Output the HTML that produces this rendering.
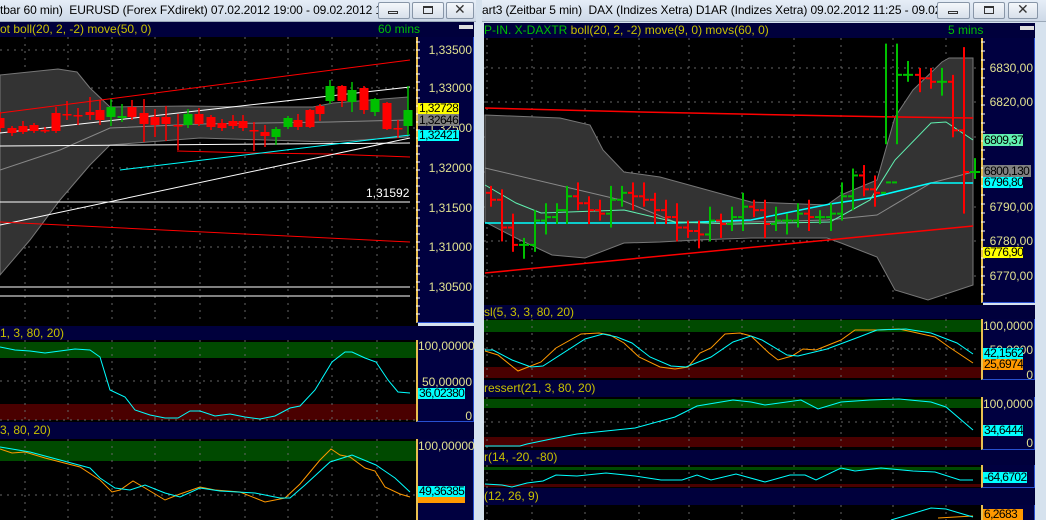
<!DOCTYPE html>
<html><head><meta charset="utf-8">
<style>
*{margin:0;padding:0;box-sizing:border-box}
body{width:1046px;height:520px;overflow:hidden;background:#d6e2ee;position:relative;font-family:"Liberation Sans",sans-serif}
.a{position:absolute}
.title{background:linear-gradient(#e6eef7,#cdd9e7);height:22px;font-size:12px;letter-spacing:-0.1px;color:#000;line-height:21px;white-space:nowrap;overflow:hidden;border-bottom:1px solid #9aa8b8}
.btn{position:absolute;top:2px;height:17px;border:1px solid #8896a8;border-radius:2px;background:linear-gradient(#f4f7fb,#d8e0ea)}
.hdr{background:#00003c;color:#c8c000;font-size:12px;line-height:15px;white-space:nowrap;overflow:hidden}
.ax{background:#000040;border-left:2px solid #e8c050;border-right:1px solid #2850d0;border-bottom:1px solid #2850d0}
.l{position:absolute;font-size:12px;color:#e0e090;line-height:12px;white-space:nowrap;text-align:right}
.b{position:absolute;font-size:12px;letter-spacing:-0.6px;color:#000;line-height:11px;height:11px;white-space:nowrap;padding-left:1px;overflow:hidden}
</style></head><body>
<!-- left window -->
<div class="a title" style="left:0;top:0;width:476px">tbar 60 min)&nbsp; EURUSD (Forex FXdirekt) 07.02.2012 19:00 - 09.02.2012 14...</div>
<div class="btn" style="left:378px;width:32px"></div><div class="btn" style="left:412px;width:32px"></div><div class="btn" style="left:446px;width:28px"></div>
<div class="a" style="left:388px;top:11px;width:10px;height:3px;border:1px solid #333"></div>
<div class="a" style="left:423px;top:6px;width:10px;height:8px;border:1px solid #333;border-top-width:2px"></div>
<div class="a" style="left:454px;top:1px;font-size:14px;color:#333">✕</div>
<div class="a hdr" style="left:0;top:22px;width:474px;height:15px">ot boll(20, 2, -2) move(50, 0)<span class="a" style="left:378px;color:#00c000">60 mins</span></div>
<div class="a" style="left:459px;top:25px;width:14px;height:4px;background:#ddd"></div>
<div class="a" style="left:0;top:37px;width:418px;height:289px;background:#000"></div>
<div class="a ax" style="left:416px;top:37px;width:58px;height:286px"></div>
<div class="a hdr" style="left:0;top:326px;width:474px;height:14px;line-height:14px">1, 3, 80, 20)</div>
<div class="a" style="left:0;top:340px;width:418px;height:82px;background:#000"></div>
<div class="a ax" style="left:416px;top:340px;width:58px;height:82px"></div>
<div class="a hdr" style="left:0;top:422px;width:474px;height:17px;line-height:17px">3, 80, 20)</div>
<div class="a" style="left:0;top:439px;width:418px;height:81px;background:#000"></div>
<div class="a ax" style="left:416px;top:439px;width:58px;height:81px;border-bottom:none"></div>
<!-- right window -->
<div class="a title" style="left:482px;top:0;width:564px">art3 (Zeitbar 5 min)&nbsp; DAX (Indizes Xetra) D1AR (Indizes Xetra) 09.02.2012 11:25 - 09.02...</div>
<div class="btn" style="left:937px;width:33px"></div><div class="btn" style="left:973px;width:32px"></div><div class="btn" style="left:1008px;width:30px"></div>
<div class="a" style="left:948px;top:11px;width:10px;height:3px;border:1px solid #333"></div>
<div class="a" style="left:984px;top:6px;width:10px;height:8px;border:1px solid #333;border-top-width:2px"></div>
<div class="a" style="left:1017px;top:1px;font-size:14px;color:#333">✕</div>
<div class="a hdr" style="left:484px;top:23px;width:551px;height:15px"><span style="color:#00c000">P-IN. X-DAXTR</span> boll(20, 2, -2) move(9, 0) movs(60, 0)<span class="a" style="left:464px;color:#00c000">5 mins</span></div>
<div class="a" style="left:1020px;top:26px;width:14px;height:4px;background:#ddd"></div>
<div class="a" style="left:484px;top:38px;width:499px;height:267px;background:#000"></div>
<div class="a ax" style="left:981px;top:38px;width:54px;height:265px"></div>
<div class="a hdr" style="left:484px;top:305px;width:551px;height:14px;line-height:14px">sl(5, 3, 3, 80, 20)</div>
<div class="a" style="left:484px;top:319px;width:499px;height:61px;background:#000"></div>
<div class="a ax" style="left:981px;top:319px;width:54px;height:61px"></div>
<div class="a hdr" style="left:484px;top:380px;width:551px;height:17px;line-height:17px">ressert(21, 3, 80, 20)</div>
<div class="a" style="left:484px;top:397px;width:499px;height:53px;background:#000"></div>
<div class="a ax" style="left:981px;top:397px;width:54px;height:53px"></div>
<div class="a hdr" style="left:484px;top:450px;width:551px;height:15px">r(14, -20, -80)</div>
<div class="a" style="left:484px;top:465px;width:499px;height:23px;background:#000"></div>
<div class="a ax" style="left:981px;top:465px;width:54px;height:23px"></div>
<div class="a hdr" style="left:484px;top:488px;width:551px;height:17px;line-height:17px">(12, 26, 9)</div>
<div class="a" style="left:484px;top:505px;width:499px;height:15px;background:#000"></div>
<div class="a ax" style="left:981px;top:505px;width:54px;height:15px;border-bottom:none"></div>

<svg id="s" class="a" style="left:0;top:0" width="1046" height="520" xmlns="http://www.w3.org/2000/svg"></svg>

<!-- left axis labels -->
<div class="l" style="left:418px;width:54px;top:44px">1,33500</div>
<div class="l" style="left:418px;width:54px;top:82px">1,33000</div>
<div class="l" style="left:418px;width:54px;top:122px">1,32500</div>
<div class="l" style="left:418px;width:54px;top:162px">1,32000</div>
<div class="l" style="left:418px;width:54px;top:202px">1,31500</div>
<div class="l" style="left:418px;width:54px;top:241px">1,31000</div>
<div class="l" style="left:418px;width:54px;top:281px">1,30500</div>
<div class="b" style="left:418px;top:103px;width:41px;background:#ffff00">1,32728</div>
<div class="b" style="left:418px;top:114px;width:41px;background:#808080;height:12px;line-height:12px">1,32646</div>
<div class="b" style="left:418px;top:130px;width:41px;background:#00ffff">1,32421</div>
<div class="l" style="left:366px;top:187px;color:#fff">1,31592</div>
<div class="l" style="left:418px;width:54px;top:340px">100,00000</div>
<div class="l" style="left:418px;width:54px;top:376px">50,00000</div>
<div class="l" style="left:418px;width:54px;top:410px">0</div>
<div class="b" style="left:418px;top:388px;width:47px;background:#00ffff">36,02380</div>
<div class="l" style="left:418px;width:54px;top:440px">100,00000</div>
<div class="b" style="left:418px;top:497px;width:47px;background:#ff9900;height:6px"></div>
<div class="b" style="left:418px;top:486px;width:47px;background:#00ffff">49,36385</div>
<!-- right axis labels -->
<div class="l" style="left:983px;width:50px;top:62px">6830,00</div>
<div class="l" style="left:983px;width:50px;top:96px">6820,00</div>
<div class="l" style="left:983px;width:50px;top:201px">6790,00</div>
<div class="l" style="left:983px;width:50px;top:235px">6780,00</div>
<div class="l" style="left:983px;width:50px;top:270px">6770,00</div>
<div class="b" style="left:983px;top:134px;width:40px;background:#60f0b0;height:12px;line-height:12px">6809,37</div>
<div class="b" style="left:983px;top:165px;width:48px;background:#808080;height:12px;line-height:12px">6800,130</div>
<div class="b" style="left:983px;top:177px;width:40px;background:#00ffff">6796,80</div>
<div class="b" style="left:983px;top:247px;width:40px;background:#ffff00">6776,90</div>
<div class="l" style="left:983px;width:50px;top:320px">100,0000</div>
<div class="l" style="left:983px;width:50px;top:344px">50,0000</div>
<div class="b" style="left:983px;top:359px;width:40px;background:#ff9900">25,6974</div>
<div class="b" style="left:983px;top:348px;width:40px;background:#00ffff">42,1562</div>
<div class="l" style="left:983px;width:50px;top:369px">0</div>
<div class="l" style="left:983px;width:50px;top:398px">100,0000</div>
<div class="b" style="left:983px;top:425px;width:40px;background:#00ffff">34,6444</div>
<div class="l" style="left:983px;width:50px;top:437px">0</div>
<div class="b" style="left:983px;top:472px;width:44px;background:#00ffff">-64,6702</div>
<div class="b" style="left:983px;top:509px;width:40px;background:#ff9900">6,2683</div>

<script>
var s=document.getElementById('s'),h='';
function L(x1,y1,x2,y2,c,w,d){h+='<line x1="'+x1+'" y1="'+y1+'" x2="'+x2+'" y2="'+y2+'" stroke="'+c+'" stroke-width="'+(w||1)+'"'+(d?' stroke-dasharray="'+d+'"':'')+'/>';}
function P(pts,c,w){h+='<polyline fill="none" stroke="'+c+'" stroke-width="'+(w||1)+'" points="'+pts+'"/>';}
function G(pts,f,st){h+='<polygon fill="'+f+'" stroke="'+(st||'none')+'" points="'+pts+'"/>';}
function R(x,y,w,hh,c){h+='<rect x="'+x+'" y="'+y+'" width="'+w+'" height="'+hh+'" fill="'+c+'"/>';}
var gd='#666',ds='2 5';
R(0,342,416,16,'#004a00');R(0,404,416,16,'#4a0000');
R(0,441,416,20,'#004a00');
R(484,320,497,12,'#004a00');R(484,367,497,11,'#4a0000');
R(484,399,497,9,'#004a00');R(484,437,497,10,'#4a0000');
R(484,467,497,3,'#004a00');R(484,484,497,3,'#4a0000');
[25,68,112,155,200,245,288,332,377].forEach(function(x){L(x,37,x,323,gd,1,ds);L(x,340,x,422,gd,1,ds);L(x,439,x,520,gd,1,ds);});
[50,88,128,168,208,247,287].forEach(function(y){L(0,y,416,y,gd,1,ds);});
[381,420].forEach(function(y){L(0,y,416,y,gd,1,ds);});[495].forEach(function(y){L(0,y,416,y,gd,1,ds);});
[487,532,585,639,689,742,794,841,893,946].forEach(function(x){L(x,38,x,303,gd,1,ds);L(x,319,x,380,gd,1,ds);L(x,397,x,450,gd,1,ds);L(x,465,x,488,gd,1,ds);L(x,505,x,520,gd,1,ds);});
[68,102,137,172,207,241,276].forEach(function(y){L(484,y,981,y,gd,1,ds);});
[349,422].forEach(function(y){L(484,y,981,y,gd,1,ds);});
G('0,75 58,69 77,72 90,88 110,107 187,106 253,107 313,107 333,103 408,97 408,137 330,142 200,138 110,145 90,165 60,200 30,240 0,275','#333','#777');
P('0,170 60,150 110,128 200,124 330,122 408,120','#888');
L(0,113,410,60,'#f00');L(0,133,410,87,'#fff');L(0,146,410,143,'#fff');
P('177,151 253,153 330,154 410,157','#f00');L(120,170,410,135,'#0ff');
L(0,225,410,138,'#fff');L(0,202,410,202,'#fff');L(0,222,410,242,'#f00');
L(0,287,410,287,'#fff');L(0,296,410,296,'#fff');
var C=[[0,118,128,112,132],[12,128,133,126,136],[23,126,132,121,134],[34,125,131,123,133],[45,130,131,127,133],[56,113,131,107,133],[67,114,114,101,120],[78,115,115,108,125],[90,112,115,97,120],[100,110,120,100,125],[111,117,107,99,126],[122,118,116,104,122],[132,107,117,100,120],[144,113,124,99,142],[155,117,125,109,137],[166,117,124,106,141],[178,125,125,114,150],[188,125,114,109,128],[199,114,124,108,126],[211,117,127,115,130],[222,123,128,119,131],[233,121,126,115,129],[243,121,128,115,131],[254,130,130,122,151],[265,132,136,125,147],[276,137,129,127,145],[288,127,118,116,129],[298,120,127,114,130],[310,110,127,109,128],[320,106,114,104,121],[330,101,86,80,104],[342,86,101,85,107],[352,102,90,82,112],[364,88,110,86,114],[375,112,99,98,116],[387,103,129,102,130],[398,128,128,120,138],[408,126,110,86,135]];
C.forEach(function(c){var col=c[2]<c[1]?'#00c000':'#f00';if(c[1]==c[2])col='#f00';L(c[0],c[3],c[0],c[4],col,1.5);var t=Math.min(c[1],c[2]),b=Math.max(c[1],c[2]);R(c[0]-4.5,t,9,Math.max(b-t,1.5),col);});
P('0,347 15,350 30,351 45,353 60,351 75,349 90,350 100,357 110,390 125,397 135,410 150,415 165,418 178,418 190,411 200,411 215,416 230,414 245,417 260,419 275,416 290,408 300,406 315,390 332,362 345,352 352,352 365,358 376,362 388,380 398,392 410,393','#0ff');
P('0,449 12,453 25,452 45,458 80,467 100,480 112,492 120,490 133,481 145,488 165,500 180,494 200,487 215,490 240,492 265,502 285,498 300,484 320,460 331,449 340,455 350,457 365,468 375,471 385,487 400,494 410,497','#f90');
P('0,447 30,452 60,460 90,468 100,478 115,488 130,490 145,485 165,493 180,497 200,488 220,491 255,493 280,498 290,498 305,485 330,462 352,455 376,465 395,478 410,492','#0ff');
G('485,115 560,118 590,125 603,150 624,172 660,177 751,202 827,205 841,195 877,180 895,117 913,90 942,62 949,58 973,58 973,285 928,300 895,290 877,257 841,243 827,238 751,238 697,240 660,242 624,243 585,258 552,255 516,238 485,222','#333','#777');
P('485,168 621,200 675,222 751,222 827,220 877,215 931,183 973,172','#888');
P('485,108 560,110 640,112 740,114 840,116 900,117 973,118','#f00',1.5);
L(485,273,973,226,'#f00',1.5);
P('485,223 675,223 751,220 830,204 870,198 931,183 973,183','#0ff',1.5);
P('485,185 516,203 541,213 624,210 675,222 733,224 830,222 870,200 895,160 931,123 946,122 973,140','#60f0b0');
var B=[[491,6794,6792],[502,6792,6784],[513,6784,6779],[524,6779,6779],[535,6779,6786],[546,6786,6787],[557,6787,6789],[567,6789,6793],[578,6793,6791],[589,6791,6789],[600,6789,6788],[611,6788,6792],[622,6792,6794],[633,6794,6793],[644,6793,6792],[655,6792,6789],[666,6789,6787],[677,6787,6784],[688,6784,6783],[699,6783,6782],[710,6782,6786],[721,6786,6785],[732,6785,6787],[743,6787,6790],[754,6790,6789],[765,6789,6785],[776,6785,6786],[787,6786,6786],[798,6786,6788],[809,6788,6787],[820,6787,6787],[831,6787,6788],[842,6788,6793],[853,6793,6799],[864,6799,6795],[875,6795,6794],[886,6794,6797],[897,6797,6828],[908,6828,6828],[920,6828,6827],[931,6827,6826],[942,6826,6826],[953,6826,6812],[964,6812,6800],[975,6800,6800]];
function py(p){return 172-(p-6800)*3.47;}
B.forEach(function(b,i){var col=b[2]>=b[1]?'#00c000':'#f00';var hi=Math.max(b[1],b[2])+2+(i%3),lo=Math.min(b[1],b[2])-2-(i%2)*2;if(i==36||i==37){hi=6837;lo=6808}if(i==43){hi=6836;lo=6788}L(b[0],py(hi),b[0],py(lo),col,2);L(b[0]-5,py(b[1]),b[0],py(b[1]),col,2);L(b[0],py(b[2]),b[0]+5,py(b[2]),col,2);});
P('485,351 498,355 518,371 541,362 556,348 581,334 599,333 610,335 624,343 639,357 660,367 675,369 688,367 700,353 711,348 725,334 740,333 751,336 769,353 778,360 792,356 803,349 816,350 841,340 855,330 877,330 899,329 913,332 935,337 949,347 973,363','#f90');
P('485,350 493,350 512,360 531,367 543,366 585,339 603,334 617,337 632,343 650,357 671,366 686,367 711,357 733,342 751,336 762,340 787,355 798,356 827,349 859,337 877,330 906,329 931,333 957,343 973,354','#0ff');
P('485,446 520,446 527,444 556,438 577,434 635,428 675,417 697,406 733,400 751,402 765,405 801,400 818,409 841,402 870,400 899,399 931,402 946,407 973,430','#0ff');
P('485,484 502,485 512,487 527,483 543,481 556,475 577,476 606,473 635,476 661,480 682,480 697,475 711,480 736,474 765,482 790,475 805,475 816,480 841,468 855,471 881,468 913,471 935,472 960,480 973,480','#0ff');
P('938,518 973,516','#f90');P('891,520 931,508 946,509 973,517','#0ff');
for(var y=42;y<322;y+=8)L(416,y,420,y,'#fff');
for(var y=42;y<302;y+=9)L(981,y,985,y,'#fff');
s.innerHTML=h;
</script>
</body></html>
